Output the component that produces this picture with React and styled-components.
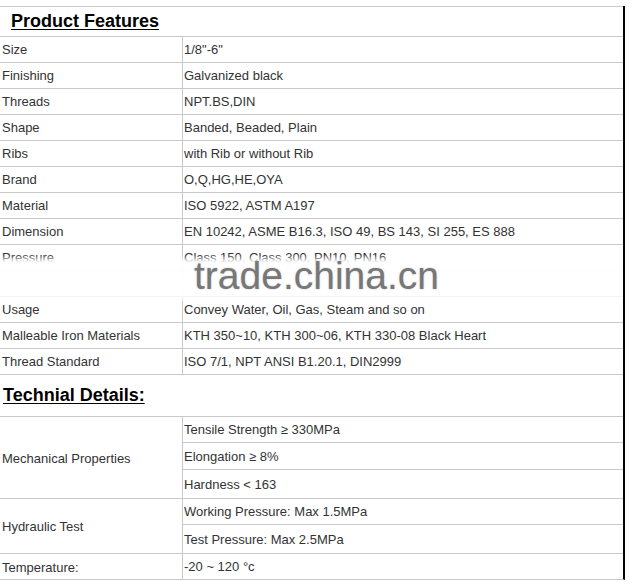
import styled, { createGlobalStyle } from "styled-components";

const GlobalStyle = createGlobalStyle`
  html, body {
    margin: 0;
    padding: 0;
    background: #fff;
  }
  body {
    font-family: "Liberation Sans", Arial, sans-serif;
  }
`;

const features = [
  { label: "Size", value: '1/8"-6"' },
  { label: "Finishing", value: "Galvanized black" },
  { label: "Threads", value: "NPT.BS,DIN" },
  { label: "Shape", value: "Banded, Beaded, Plain" },
  { label: "Ribs", value: "with Rib or without Rib" },
  { label: "Brand", value: "O,Q,HG,HE,OYA" },
  { label: "Material", value: "ISO 5922, ASTM A197" },
  {
    label: "Dimension",
    value: "EN 10242, ASME B16.3, ISO 49, BS 143, SI 255, ES 888",
  },
  { label: "Pressure", value: "Class 150, Class 300, PN10, PN16" },
  { label: "", value: "" },
  { label: "Usage", value: "Convey Water, Oil, Gas, Steam and so on" },
  {
    label: "Malleable Iron Materials",
    value: "KTH 350~10, KTH 300~06, KTH 330-08 Black Heart",
  },
  { label: "Thread Standard", value: "ISO 7/1, NPT ANSI B1.20.1, DIN2999" },
];

const details = [
  {
    label: "Mechanical Properties",
    items: [
      { text: "Tensile Strength ≥ 330MPa", h: 26 },
      { text: "Elongation ≥ 8%", h: 27 },
      { text: "Hardness < 163", h: 29 },
    ],
  },
  {
    label: "Hydraulic Test",
    items: [
      { text: "Working Pressure: Max 1.5MPa", h: 26 },
      { text: "Test Pressure: Max 2.5MPa", h: 29 },
    ],
  },
  {
    label: "Temperature:",
    items: [{ text: "-20 ~ 120 °c", h: 26 }],
  },
];

const App = () => {
  return (
    <>
      <GlobalStyle />
      <Sheet>
        <HeadingRow $height={30} $indent={11}>
          <Heading>Product Features</Heading>
        </HeadingRow>
        {features.map(({ label, value }, i) => (
          <Row key={`feature_${i}`}>
            <Label>{label}</Label>
            <Value>{value}</Value>
          </Row>
        ))}
        <HeadingRow $height={42} $indent={3}>
          <Heading>Technial Details:</Heading>
        </HeadingRow>
        {details.map(({ label, items }) => (
          <Group key={label}>
            <GroupLabel>{label}</GroupLabel>
            <SubList>
              {items.map(({ text, h }) => (
                <SubRow key={text} $height={h}>
                  {text}
                </SubRow>
              ))}
            </SubList>
          </Group>
        ))}
        <Watermark>
          <WatermarkText>trade.china.cn</WatermarkText>
        </Watermark>
      </Sheet>
    </>
  );
};

const Sheet = styled.div`
  position: relative;
  box-sizing: border-box;
  width: 625px;
  margin-top: 6px;
  border-right: 2px solid #000;
  border-bottom: 1px solid #c8c8c8;
  color: #333;
  font-size: 13px;
`;

const HeadingRow = styled.div`
  box-sizing: border-box;
  height: ${(p) => p.$height}px;
  border-top: 1px solid #c8c8c8;
  display: flex;
  align-items: center;
  padding-left: ${(p) => p.$indent}px;
`;

const Heading = styled.span`
  font-size: 18px;
  font-weight: bold;
  color: #000;
  text-decoration: underline;
  text-underline-offset: 2px;
`;

const Row = styled.div`
  box-sizing: border-box;
  height: 26px;
  border-top: 1px solid #c8c8c8;
  display: grid;
  grid-template-columns: 183px 1fr;
`;

const Label = styled.div`
  border-right: 1px solid #c8c8c8;
  display: flex;
  align-items: center;
  padding-left: 2px;
  white-space: nowrap;
`;

const Value = styled.div`
  display: flex;
  align-items: center;
  padding-left: 1px;
  white-space: nowrap;
`;

const Group = styled.div`
  border-top: 1px solid #c8c8c8;
  display: grid;
  grid-template-columns: 183px 1fr;
`;

const GroupLabel = styled(Label)`
  padding-top: 1px;
`;

const SubList = styled.div`
  display: flex;
  flex-direction: column;
  margin-top: -1px;
`;

const SubRow = styled.div`
  box-sizing: border-box;
  height: ${(p) => p.$height}px;
  border-top: 1px solid #c8c8c8;
  display: flex;
  align-items: center;
  padding-left: 1px;
  white-space: nowrap;
`;

const Watermark = styled.div`
  position: absolute;
  top: 249px;
  left: 0;
  right: 0;
  height: 46px;
  padding: 1px 0 0 194px;
  box-sizing: border-box;
  background: linear-gradient(
    to bottom,
    rgba(255, 255, 255, 0) 0,
    rgba(255, 255, 255, 0.96) 7px,
    rgba(255, 255, 255, 0.98) 38px,
    rgba(255, 255, 255, 0.6) 46px
  );
`;

const WatermarkText = styled.span`
  display: block;
  font-size: 39px;
  line-height: 39px;
  color: #777;
  text-shadow: 0 0 2px rgba(140, 140, 140, 0.5);
`;

export default App;
